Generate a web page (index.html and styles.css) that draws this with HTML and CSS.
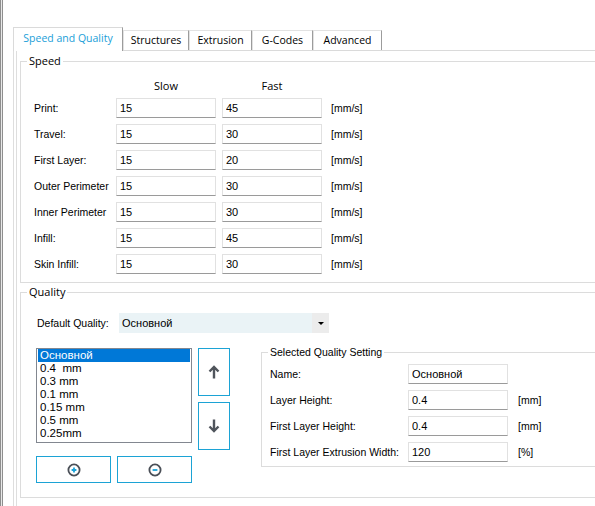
FILE: index.html
```html
<!DOCTYPE html>
<html lang="en">
<head>
    <meta charset="UTF-8">
    <title>Settings</title>
    <link rel="stylesheet" href="styles.css">
</head>
<body>
    <div class="splitter"></div>
    <div class="main">
        <div class="tabs">
            <div class="tab active" style="width:110px">Speed and Quality</div>
            <div class="tab" style="width:66px">Structures</div>
            <div class="tab" style="width:63px">Extrusion</div>
            <div class="tab" style="width:61px">G-Codes</div>
            <div class="tab" style="width:69px">Advanced</div>
        </div>
        <div class="page">
            <!-- Speed -->
            <fieldset class="group speed">
                <legend>Speed</legend>
                <div class="speed-grid">
                    <span></span><span class="head">Slow</span><span class="head">Fast</span><span></span>

                    <label>Print:</label><input value="15"><input value="45"><span class="unit">[mm/s]</span>
                    <label>Travel:</label><input value="15"><input value="30"><span class="unit">[mm/s]</span>
                    <label>First Layer:</label><input value="15"><input value="20"><span class="unit">[mm/s]</span>
                    <label>Outer Perimeter</label><input value="15"><input value="30"><span class="unit">[mm/s]</span>
                    <label>Inner Perimeter</label><input value="15"><input value="30"><span class="unit">[mm/s]</span>
                    <label>Infill:</label><input value="15"><input value="45"><span class="unit">[mm/s]</span>
                    <label>Skin Infill:</label><input value="15"><input value="30"><span class="unit">[mm/s]</span>
                </div>
            </fieldset>

            <!-- Quality -->
            <fieldset class="group quality">
                <legend>Quality</legend>
                <div class="quality-body">
                    <div class="default-row">
                        <label>Default Quality:</label>
                        <div class="combo">
                            <span class="combo-text">Основной</span>
                            <span class="combo-drop"><span class="caret"></span></span>
                        </div>
                    </div>

                    <div class="lower">
                        <div class="list-col">
                            <div class="listbox">
                                <div class="item selected">Основной</div>
                                <div class="item">0.4  mm</div>
                                <div class="item">0.3 mm</div>
                                <div class="item">0.1 mm</div>
                                <div class="item">0.15 mm</div>
                                <div class="item">0.5 mm</div>
                                <div class="item">0.25mm</div>
                            </div>
                            <div class="list-buttons">
                                <button class="btn wide">
                                    <svg width="14" height="14" viewBox="0 0 14 14">
                                        <circle cx="7" cy="7" r="5.6" fill="none" stroke="#4a4f57" stroke-width="1.8"/>
                                        <path d="M7 4.6 V9.4 M4.6 7 H9.4" stroke="#1aa3d9" stroke-width="1.8"/>
                                    </svg>
                                </button>
                                <button class="btn wide">
                                    <svg width="14" height="14" viewBox="0 0 14 14">
                                        <circle cx="7" cy="7" r="5.6" fill="none" stroke="#4a4f57" stroke-width="1.8"/>
                                        <path d="M4.6 7 H9.4" stroke="#1aa3d9" stroke-width="1.8"/>
                                    </svg>
                                </button>
                            </div>
                        </div>
                        <div class="arrow-col">
                            <button class="btn tall">
                                <svg width="12" height="14" viewBox="0 0 12 14">
                                    <path d="M1.5 6.5 L6 2 L10.5 6.5 M6 2.5 V13.5" fill="none" stroke="#50555c" stroke-width="2.4"/>
                                </svg>
                            </button>
                            <button class="btn tall">
                                <svg width="12" height="14" viewBox="0 0 12 14">
                                    <path d="M1.5 7.5 L6 12 L10.5 7.5 M6 0.5 V11.5" fill="none" stroke="#50555c" stroke-width="2.4"/>
                                </svg>
                            </button>
                        </div>

                        <fieldset class="group selected-setting">
                            <legend>Selected Quality Setting</legend>
                            <div class="setting-grid">
                                <label>Name:</label><input value="Основной"><span></span>
                                <label>Layer Height:</label><input value="0.4"><span class="unit">[mm]</span>
                                <label>First Layer Height:</label><input value="0.4"><span class="unit">[mm]</span>
                                <label>First Layer Extrusion Width:</label><input value="120"><span class="unit">[%]</span>
                            </div>
                        </fieldset>
                    </div>
                </div>
            </fieldset>
        </div>
    </div>
</body>
</html>
```

FILE: styles.css
```css
body {
    margin: 0;
    height: 506px;
    overflow: hidden;
    display: flex;
    background: #fff;
    color: #000;
    font-family: "Liberation Sans", Arial, sans-serif;
    font-size: 10.5px;
}
.splitter {
    width: 1px;
    border-left: 1px solid #8e8e8e;
    border-right: 1px solid #8e8e8e;
    background: #e8e8e8;
}
.main {
    flex: 1;
    padding: 27px 0 0 10px;
    overflow: hidden;
}

/* Tabs */
.tabs {
    display: flex;
    align-items: flex-end;
    height: 23px;
}
.tab {
    box-sizing: border-box;
    height: 20px;
    border-top: 1px solid #e2e2e2;
    border-left: 1px solid #e2e2e2;
    border-right: 1px solid #9c9c9c;
    font-family: "Open Sans", sans-serif;
    font-size: 10.5px;
    line-height: 18px;
    text-align: center;
    background: #fff;
}
.tab.active {
    height: 24px;
    margin-bottom: -1px;
    position: relative;
    z-index: 1;
    color: #1a9ed8;
    border-color: #dadada;
    border-right-color: #9c9c9c;
    line-height: 20px;
}
.page {
    width: 640px;
    height: 480px;
    border-top: 1px solid #dadada;
    border-left: 4px double #dedede;
    padding: 3px 0 0 3px;
}

/* Group boxes */
.group {
    margin: 0;
    padding: 0;
    border: 1px solid #dcdcdc;
    min-width: 0;
}
.group legend {
    margin-left: 6px;
    padding: 0 2px;
    line-height: 14px;
    font-family: "Open Sans", sans-serif;
    font-size: 11px;
}
input {
    box-sizing: border-box;
    width: 100px;
    height: 20px;
    margin: 0;
    padding: 0 3px;
    border: 1px solid #e1e1e1;
    border-bottom-color: #9a9a9a;
    font-family: "Liberation Sans", Arial, sans-serif;
    font-size: 11px;
    color: #000;
}
.unit {
    margin-left: 3px;
}

/* Speed */
.speed-grid {
    display: grid;
    grid-template-columns: 76px 100px 100px auto;
    column-gap: 6px;
    row-gap: 6px;
    align-items: center;
    padding: 12px 0 8px 13px;
}
.speed-grid label {
    white-space: nowrap;
}
.speed-grid .head {
    height: 12px;
    line-height: 12px;
    text-align: center;
    font-family: "Open Sans", sans-serif;
    font-size: 11px;
}

/* Quality */
.quality {
    margin-top: 2px;
}
.quality-body {
    padding: 14px 0 14px 15px;
}
.default-row {
    display: flex;
    align-items: center;
    padding-left: 1px;
}
.default-row label {
    width: 82px;
}
.combo {
    display: flex;
    width: 210px;
    height: 20px;
    background: #eaf3f6;
}
.combo-text {
    flex: 1;
    padding-left: 3px;
    line-height: 20px;
    font-size: 11px;
}
.combo-drop {
    width: 17px;
    background: #ececec;
    display: flex;
    align-items: center;
    justify-content: center;
}
.caret {
    border-left: 3px solid transparent;
    border-right: 3px solid transparent;
    border-top: 3px solid #000;
}
.lower {
    display: flex;
    align-items: flex-start;
    margin-top: 15px;
}
.listbox {
    box-sizing: border-box;
    width: 156px;
    height: 95px;
    border: 1px solid #828790;
    padding: 0 1px;
}
.item {
    height: 13px;
    line-height: 13px;
    padding-left: 2px;
    white-space: pre;
    font-size: 11.5px;
}
.item.selected {
    background: #0078d7;
    color: #fff;
}
.list-buttons {
    display: flex;
    gap: 6px;
    margin-top: 13px;
}
.btn {
    box-sizing: border-box;
    margin: 0;
    padding: 0;
    background: #fff;
    border: 1px solid #1ca3d5;
    display: flex;
    align-items: center;
    justify-content: center;
}
.btn.wide {
    width: 75px;
    height: 27px;
}
.btn.tall {
    width: 32px;
    height: 48px;
}
.arrow-col {
    display: flex;
    flex-direction: column;
    gap: 6px;
    margin-left: 6px;
}
.selected-setting {
    flex: 1;
    margin: -3px 0 0 31px;
}
.selected-setting legend {
    font-family: "Liberation Sans", Arial, sans-serif;
    font-size: 10.5px;
}
.setting-grid {
    display: grid;
    grid-template-columns: 138px 100px auto;
    row-gap: 6px;
    align-items: center;
    padding: 5px 0 4px 8px;
}
.setting-grid .unit {
    margin-left: 10px;
}
```
